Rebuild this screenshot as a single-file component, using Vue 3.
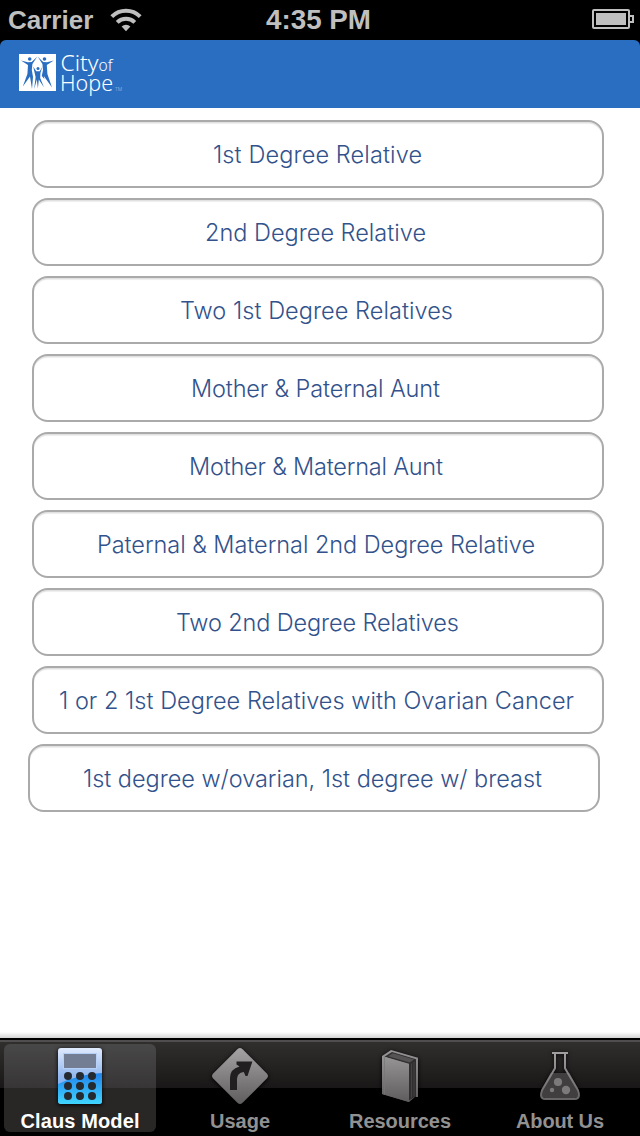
<template>
  <div class="screen">
    <!-- status bar -->
    <div class="status-bar">
      <div class="status-left">
        <span class="carrier">Carrier</span>
        <svg class="wifi" width="32" height="24" viewBox="0 0 32 24">
          <g fill="none" stroke="#bfbfbf" stroke-width="4">
            <path d="M1.8 8.6 A20.2 20.2 0 0 1 30.2 8.6" />
            <path d="M7.2 14.4 A12.6 12.6 0 0 1 24.8 14.4" />
          </g>
          <path d="M11.6 18.6 A6.3 6.3 0 0 1 20.4 18.6 L16 23.2 Z" fill="#bfbfbf" />
        </svg>
      </div>
      <svg class="clock" width="106" height="40">
        <text x="0" y="29" textLength="105" lengthAdjust="spacingAndGlyphs">4:35 PM</text>
      </svg>
      <svg class="battery" width="42" height="20" viewBox="0 0 42 20">
        <rect x="1" y="1" width="36" height="18" rx="1" fill="none" stroke="#bfbfbf" stroke-width="2" />
        <rect x="4" y="4" width="30" height="12" fill="#bfbfbf" />
        <path d="M38 7 H41 V13 H38" fill="none" stroke="#bfbfbf" stroke-width="2" />
      </svg>
    </div>

    <!-- brand header -->
    <header class="brand-bar">
      <svg class="brand-mark" width="37" height="37" viewBox="0 0 37 37">
        <rect width="37" height="37" fill="#fff" />
        <g fill="#2a6ec2">
          <circle cx="10.7" cy="5" r="1.8" />
          <circle cx="25.5" cy="5" r="1.8" />
          <circle cx="19" cy="14.6" r="1.5" />
          <path d="M2 6.4 L8.8 8.2 L12.6 8 L18.2 2.8 L13.4 10 L12.8 16 L14 23 L13 35 L11 22.5 L3.8 32.6 L8.4 20 L9 11 Z" />
          <path d="M34.8 6.4 L28 8.2 L24.2 8 L18.8 2.8 L23.4 10 L24 16 L22.8 22 L25.4 25 L24.8 22 L33 33.6 L28.4 20 L27.8 11 Z" />
          <path d="M14.2 12.4 L17.2 17.2 L20.8 17.2 L23.4 12.4 L21.4 19 L21.2 24 L25 33.4 L19.8 25.5 L18.9 34.5 L17.8 25.5 L15.2 35.2 L16.6 23 Z" />
        </g>
      </svg>
      <svg class="brand-name" width="70" height="46">
        <text x="-0.5" y="16.6" textLength="38" lengthAdjust="spacingAndGlyphs">City</text>
        <text class="of" x="37.5" y="16.6" textLength="14" lengthAdjust="spacingAndGlyphs">of</text>
        <text x="-1" y="37.4" textLength="53" lengthAdjust="spacingAndGlyphs">Hope</text>
        <text class="tm" x="54" y="37.4">TM</text>
      </svg>
    </header>

    <!-- model choices -->
    <main class="options">
      <button
        v-for="option in options"
        :key="option.label"
        type="button"
        class="option"
        :class="{ shifted: option.shifted }"
      >
        <svg class="option-label" width="568" height="64">
          <text
            :x="option.x"
            y="41"
            :textLength="option.width"
            lengthAdjust="spacing"
          >{{ option.label }}</text>
        </svg>
      </button>
    </main>

    <!-- tab bar -->
    <nav class="tab-bar">
      <div
        v-for="tab in tabs"
        :key="tab.id"
        class="tab"
        :class="{ active: tab.id === activeTab }"
        @click="activeTab = tab.id"
      >
        <svg v-if="tab.id === 'claus'" class="tab-icon" width="60" height="60" viewBox="0 0 60 60">
          <defs>
            <linearGradient id="calcTop" x1="0" y1="0" x2="0" y2="1">
              <stop offset="0" stop-color="#e0eafc" />
              <stop offset="0.5" stop-color="#93b8ef" />
              <stop offset="1" stop-color="#65a5ee" />
            </linearGradient>
            <linearGradient id="calcBottom" x1="0" y1="0" x2="0" y2="1">
              <stop offset="0" stop-color="#2183ec" />
              <stop offset="1" stop-color="#40d4ff" />
            </linearGradient>
            <clipPath id="calcShape">
              <rect x="8" y="2" width="44" height="56" rx="3" />
            </clipPath>
          </defs>
          <g clip-path="url(#calcShape)">
            <rect x="8" y="2" width="44" height="56" fill="url(#calcTop)" />
            <path d="M8 38 Q30 28 52 27 V58 H8 Z" fill="url(#calcBottom)" />
          </g>
          <rect x="13.5" y="7.5" width="33" height="15" fill="#737d94" stroke="#b7d0f5" />
          <g fill="#252a31">
            <circle v-for="key in calcKeys" :key="key.id" :cx="key.x" :cy="key.y" r="4" />
          </g>
        </svg>

        <svg v-else-if="tab.id === 'usage'" class="tab-icon" width="60" height="60" viewBox="0 0 60 60">
          <defs>
            <linearGradient id="signFill" x1="0" y1="0" x2="0" y2="1">
              <stop offset="0" stop-color="#a5a3a3" />
              <stop offset="1" stop-color="#5f5d5d" />
            </linearGradient>
          </defs>
          <path
            d="M27.4 3.2 Q30 .8 32.6 3.2 L56.8 27.4 Q59.2 30 56.8 32.6 L32.6 56.8 Q30 59.2 27.4 56.8 L3.2 32.6 Q.8 30 3.2 27.4 Z"
            fill="url(#signFill)"
          />
          <path d="M20 44 V32 Q20 23 29.5 20.5 L26.5 18.5 V15.5 H42.4 L37.5 30 H35.5 L33.8 26 Q27 27 27 33 V44 Z" fill="#211f1f" />
        </svg>

        <svg v-else-if="tab.id === 'resources'" class="tab-icon" width="60" height="60" viewBox="0 0 60 60">
          <defs>
            <linearGradient id="bookFill" x1="0" y1="0" x2="0" y2="1">
              <stop offset="0" stop-color="#979595" />
              <stop offset="1" stop-color="#5e5c5c" />
            </linearGradient>
          </defs>
          <path d="M12 10 L21 4 L48 11.8 V51 H46 V50 L39 56 L12 48 Z" fill="url(#bookFill)" />
          <path d="M14.5 10.8 L22 6 L46 13.2 V50 L39 54.6 V17.8 Z" fill="#302e2e" />
          <path d="M18 10.3 L23 7.2 L44 13.6 L39.5 16.5 Z" fill="#555353" />
          <path d="M41.5 17.5 V51.5 M44 16 V50" fill="none" stroke="#4a4848" stroke-width="0.8" />
          <path d="M12 10 L39 18.2 V56 L12 48 Z" fill="url(#bookFill)" />
          <path d="M14.5 11.2 V48.5" stroke="#777" stroke-width="0.7" />
        </svg>

        <svg v-else class="tab-icon" width="60" height="60" viewBox="0 0 60 60">
          <defs>
            <linearGradient id="flaskLine" x1="0" y1="0" x2="0" y2="1">
              <stop offset="0" stop-color="#a19f9f" />
              <stop offset="1" stop-color="#666464" />
            </linearGradient>
          </defs>
          <path d="M20.5 27 H39.5 L48 43 Q50 52 45 52 H15 Q10 52 12 43 Z" fill="#403e3e" />
          <path
            d="M22 6 H38 V8 H36 V22 L48.7 43.5 Q52.5 54 44.5 54 H15.5 Q7.5 54 11.3 43.5 L24 22 V8 H22 Z M26 8 V22.5 L13 44.5 Q10 52 16 52 H44 Q50 52 47 44.5 L34 22.5 V8 Z"
            fill="url(#flaskLine)"
            fill-rule="evenodd"
          />
          <g fill="#7c7a7a">
            <circle cx="28" cy="36" r="4.1" />
            <circle cx="36" cy="44" r="4.2" />
            <circle cx="22" cy="44" r="2.2" />
          </g>
        </svg>
        <svg class="tab-label" width="152" height="26">
          <text x="76" y="20" text-anchor="middle" :textLength="tab.width">{{ tab.label }}</text>
        </svg>
      </div>
    </nav>
  </div>
</template>

<script setup>
import { ref } from 'vue';

const activeTab = ref('claus');

// x / width are the start and advance of each label inside its button
const options = [
  { label: '1st Degree Relative', x: 179, width: 209 },
  { label: '2nd Degree Relative', x: 171, width: 221 },
  { label: 'Two 1st Degree Relatives', x: 146, width: 273 },
  { label: 'Mother & Paternal Aunt', x: 157, width: 249 },
  { label: 'Mother & Maternal Aunt', x: 155, width: 254 },
  { label: 'Paternal & Maternal 2nd Degree Relative', x: 63, width: 438 },
  { label: 'Two 2nd Degree Relatives', x: 142, width: 283 },
  { label: '1 or 2 1st Degree Relatives with Ovarian Cancer', x: 25, width: 515 },
  { label: '1st degree w/ovarian, 1st degree w/ breast', x: 53, width: 459, shifted: true },
];

const tabs = [
  { id: 'claus', label: 'Claus Model', width: 119 },
  { id: 'usage', label: 'Usage', width: 60 },
  { id: 'resources', label: 'Resources', width: 102 },
  { id: 'about', label: 'About Us', width: 88 },
];

const calcKeys = [30, 40, 50].flatMap(y =>
  [18, 30, 42].map(x => ({ id: `${x}-${y}`, x, y })),
);
</script>

<style>
body {
  background: #000;
}
</style>

<style scoped>
.screen {
  display: flex;
  flex-direction: column;
  width: 640px;
  height: 1136px;
  overflow: hidden;
  background: #000;
  font-family: 'Liberation Sans', Arial, sans-serif;
}

.status-bar {
  display: grid;
  grid-template-columns: 1fr auto 1fr;
  align-items: center;
  flex: none;
  height: 40px;
  padding: 0 6px 0 8px;
  color: #bfbfbf;
  font-weight: bold;
  line-height: 40px;
}

.status-left {
  display: flex;
  align-items: center;
}

.carrier {
  width: 102px;
  font-size: 26px;
}

.clock {
  margin-right: 4px;
  fill: #bfbfbf;
  font-size: 28px;
}

.battery {
  justify-self: end;
  margin-bottom: 2px;
}

.brand-bar {
  display: flex;
  flex: none;
  box-sizing: border-box;
  height: 68px;
  padding: 14px 0 0 19px;
  border-radius: 6px 6px 0 0;
  background: #2a6ec2;
}

.brand-name {
  margin-left: 5px;
  overflow: visible;
  fill: #fff;
  font-family: 'Noto Sans', 'Open Sans', sans-serif;
  font-size: 22px;
  font-weight: 300;
}

.of {
  font-size: 17px;
}

.tm {
  fill: #a9c5e7;
  font-size: 5px;
}

.options {
  display: flex;
  flex: 1;
  flex-direction: column;
  gap: 10px;
  padding: 12px 36px 0 32px;
  background: linear-gradient(to top, #d5d5d5, #fff 6px);
}

.option {
  box-sizing: border-box;
  flex: none;
  width: 572px;
  height: 68px;
  padding: 0;
  border: 2px solid #aaa;
  border-radius: 16px;
  background: #fff;
  box-shadow: inset 0 2px 1px -0.5px #e0e0e0;
}

.option.shifted {
  margin-left: -4px;
}

.option-label {
  display: block;
  fill: #32528c;
  font-family: Inter, sans-serif;
  font-size: 23.5px;
  font-weight: 300;
}

.tab-bar {
  display: grid;
  grid-template-columns: repeat(4, 152px);
  gap: 8px;
  flex: none;
  box-sizing: border-box;
  height: 98px;
  padding: 4px;
  border-top: 2px solid #000;
  background: linear-gradient(#504e4e 0 2px, #312e2e 2px, #191717 48px, #000 48px);
}

.tab {
  display: flex;
  flex-direction: column;
  align-items: center;
  border-radius: 6px;
}

.tab.active {
  background: linear-gradient(#494848, #373535 44px, #292626 44px, #292626);
}

.tab-icon {
  flex: none;
  margin-top: 2px;
  filter: drop-shadow(0 1px 2px #000);
}

.tab-label {
  flex: none;
  margin-top: 2px;
  margin-bottom: -2px;
  fill: #929191;
  font-size: 20px;
  font-weight: bold;
}

.tab.active .tab-label {
  fill: #fff;
}
</style>
